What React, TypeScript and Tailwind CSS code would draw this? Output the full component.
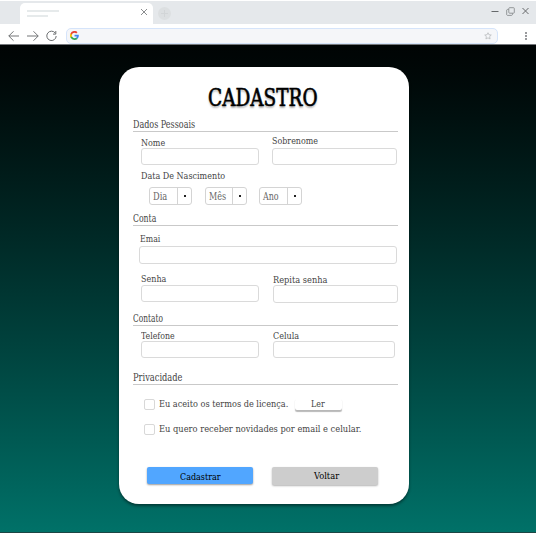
import { useLayoutEffect, useRef, useState } from "react";
import type { ReactNode } from "react";

const slab = "font-['DejaVu_Serif_Condensed','DejaVu_Serif',serif]";

/** Single-line text condensed to a given width, like a narrow slab face. */
function Fit({ w, className = "", children }: { w: number; className?: string; children: ReactNode }) {
  const ref = useRef<HTMLSpanElement>(null);
  const [scale, setScale] = useState(1);
  useLayoutEffect(() => {
    if (ref.current) setScale(w / ref.current.offsetWidth);
  }, [w]);
  return (
    <span className={`block shrink-0 whitespace-nowrap ${className}`} style={{ width: w }}>
      <span ref={ref} className="inline-block origin-left" style={{ transform: `scaleX(${scale})` }}>
        {children}
      </span>
    </span>
  );
}

function Section({ title, w, className }: { title: string; w: number; className: string }) {
  return (
    <div className={`h-[13px] border-b border-[#c9c9c9] ${className}`}>
      <Fit w={w} className="h-3 text-[10.5px] leading-[11px]">{title}</Fit>
    </div>
  );
}

function Field({ label, w, box, labelBox = "h-[11px]", className = "" }: { label: string; w: number; box: string; labelBox?: string; className?: string }) {
  return (
    <label className={`flex flex-col ${className}`}>
      <Fit w={w} className={`text-[10px] leading-[11px] ${labelBox}`}>{label}</Fit>
      <input className={`rounded-[3px] border border-[#dadada] bg-white outline-none ${box}`} />
    </label>
  );
}

function Select({ label, w, className }: { label: string; w: number; className: string }) {
  return (
    <button type="button" className={`flex h-[18px] items-stretch rounded-[3px] border border-[#d4d4d4] bg-white text-[#666] ${className}`}>
      <span className="flex flex-1 items-center pl-[3px]">
        <Fit w={w} className="text-left text-[10.5px] leading-[14px]">{label}</Fit>
      </span>
      <span className="flex w-[14px] items-center justify-center border-l border-[#d4d4d4]">
        <span className="size-[2px] bg-[#222]" />
      </span>
    </button>
  );
}

function Browser() {
  return (
    <header className="h-[45px] border-b border-[#74777b] bg-white">
      <div className="flex h-6 border-t border-white bg-[#e5e8eb]">
        <div className="h-full w-5 rounded-br-[4px] bg-[#e5e8eb]" />
        <div className="mt-[2px] flex h-[21px] w-[133px] items-center justify-between rounded-t-[5px] bg-white pl-[7px] pr-[5px]">
          <div className="flex flex-col gap-[3px]">
            <span className="h-[2px] w-8 bg-[#e6eaeb]" />
            <span className="h-[2px] w-[21px] bg-[#e6eaeb]" />
          </div>
          <svg className="-mt-[3px]" width="8" height="8" viewBox="0 0 8 8" stroke="#8b8d8f" fill="none"><path d="M1 1l6 6M7 1L1 7" /></svg>
        </div>
        <div className="ml-[5px] mt-[6px] flex size-[13px] items-center justify-center rounded-full bg-[#dcdfe1]">
          <svg width="7" height="7" viewBox="0 0 7 7" stroke="#d2d5d7"><path d="M3.5 0v7M0 3.5h7" /></svg>
        </div>
        <div className="ml-auto flex h-5 items-center gap-[7px] pr-[7px]">
          <svg width="8" height="8" viewBox="0 0 8 8" stroke="#66696b"><path d="M.5 4.5h7" /></svg>
          <svg width="9" height="9" viewBox="0 0 9 9" stroke="#8a8d90" fill="none" strokeWidth=".9"><rect x="2.8" y=".7" width="5.5" height="5.5" rx=".8" /><path d="M2.8 2.4H1.3L.7 3v4.8l.6.6h4.4l.7-.6V6.2" /></svg>
          <svg width="7" height="8" viewBox="0 0 7 8" stroke="#66696b"><path d="M.5 1l6 6M6.500 1l-6 6" /></svg>
        </div>
      </div>
      <div className="flex h-5 items-center pl-2 pt-[3px]">
        <svg width="11" height="12" viewBox="0 0 11 12" fill="none" stroke="#6b6e70" strokeWidth=".95"><path d="M11 6H.8M5.500 1.300L.8 6l4.700 4.700" /></svg>
        <svg className="ml-2" width="12" height="12" viewBox="0 0 12 12" fill="none" stroke="#6b6e70" strokeWidth=".95"><path d="M0 6h11.200M6.500 1.300L11.200 6l-4.700 4.700" /></svg>
        <svg className="ml-[7px]" width="11" height="12" viewBox="0 0 11 12" fill="none" stroke="#6b6e70"><path d="M9.300 3.100A4.700 4.700 0 1 0 10.200 6M7 4.100h2.800V1" /></svg>
        <div className="ml-[9px] flex h-[16px] w-[432px] items-center justify-between rounded-[5px] border border-[#d5e4fa] bg-[#f5f6f9] px-[3px]">
          <svg width="9" height="9" viewBox="0 0 24 24">
            <path fill="#4285f4" d="M23.5 12.3c0-.9-.1-1.5-.2-2.2H12v4.3h6.5c-.3 1.5-1.1 2.7-2.4 3.5v3h4c2.200-2 3.400-5 3.400-8.600z" />
            <path fill="#34a853" d="M12 24c3.200 0 6-1 8-2.900l-4-3c-1 .7-2.400 1.200-4 1.200-3.100 0-5.800-2.100-6.700-5H1.200v3.100A12 12 0 0 0 12 24z" />
            <path fill="#fbbc05" d="M5.300 14.300a7 7 0 0 1 0-4.600V6.600H1.200a12 12 0 0 0 0 10.800z" />
            <path fill="#ea4335" d="M12 4.700c1.800 0 3.300.6 4.600 1.800L20 3A12 12 0 0 0 1.200 6.600l4.100 3.100c.9-2.900 3.600-5 6.700-5z" />
          </svg>
          <svg className="mr-[2px]" width="8" height="8" viewBox="0 0 10 10" fill="none" stroke="#b7babd"><path d="M5 .9l1.200 2.600 2.900.3-2.100 2 .6 2.900L5 7.300 2.400 8.700 3 5.800.9 3.800l2.900-.3z" /></svg>
        </div>
        <div className="ml-auto mr-[9px] flex flex-col gap-[1px]">
          <span className="size-[2px] rounded-full bg-[#77797c]" /><span className="size-[2px] rounded-full bg-[#77797c]" /><span className="size-[2px] rounded-full bg-[#77797c]" />
        </div>
      </div>
    </header>
  );
}

export default function App() {
  return (
    <div className={`flex h-[533px] w-[536px] flex-col overflow-hidden text-[#444] ${slab}`}>
      <Browser />
      <main className="flex-1 border-b border-[#1d4644] bg-linear-to-b from-[#000404] to-[#007168] pt-[22px]">
        <form className="ml-[119px] flex h-[437px] w-[290px] flex-col rounded-[20px] bg-white pl-[14px] pr-[11px] shadow-[0_2px_3px_rgba(0,0,0,0.45)]">
          <h1 className="ml-[75px] mt-[13px] h-[34px] text-black [-webkit-text-stroke:0.6px_black] [text-shadow:0_2px_2px_rgba(0,0,0,0.3)]">
            <Fit w={110} className="text-[25px] leading-[35px]">CADASTRO</Fit>
          </h1>
          <Section title="Dados Pessoais" w={62} className="mt-[5px]" />
          <div className="mt-[3px] flex items-end pl-2">
            <Field label="Nome" w={24} box="h-[17px] w-[118px]" />
            <Field label="Sobrenome" w={46} box="h-[17px] w-[125px]" labelBox="h-[13px]" className="ml-[13px]" />
          </div>
          <Fit w={84} className="ml-2 mt-[5px] h-[12px] text-[10px] leading-[11px]">Data De Nascimento</Fit>
          <div className="mt-[5px] flex pl-4">
            <Select label="Dia" w={14} className="w-[43px]" />
            <Select label="Mês" w={17} className="ml-[13px] w-[42px]" />
            <Select label="Ano" w={16} className="ml-[12px] w-[43px]" />
          </div>
          <Section title="Conta" w={23} className="mt-[8px]" />
          <Field label="Emai" w={20} box="h-[18px] w-[258px] -ml-px" labelBox="h-[13px]" className="ml-[7px] mt-[7px]" />
          <div className="mt-[9px] flex items-start pl-2">
            <Field label="Senha" w={25} box="h-[17px] w-[118px]" labelBox="h-[12px]" />
            <Field label="Repita senha" w={54} box="h-[18px] w-[125px]" labelBox="h-[11px]" className="ml-[14px] mt-px" />
          </div>
          <Section title="Contato" w={30} className="mt-[10px]" />
          <div className="mt-[4px] flex pl-2">
            <Field label="Telefone" w={34} box="h-[17px] w-[118px]" />
            <Field label="Celula" w={26} box="h-[17px] w-[122px]" className="ml-[14px]" />
          </div>
          <Section title="Privacidade" w={49} className="mt-[14px]" />
          <div className="mt-[13px] flex h-[12px] items-center pl-[11px]">
            <span className="size-[11px] rounded-[2px] border border-[#d8d8d8]" />
            <Fit w={129} className="ml-1 text-[10px] leading-[12px]">Eu aceito os termos de licença.</Fit>
            <button type="button" className="ml-[7px] flex h-[11px] w-[47px] justify-center rounded-[2px] bg-white shadow-[0_1.5px_1px_rgba(0,0,0,0.28)]">
              <Fit w={14} className="-ml-[2px] text-left text-[10px] leading-[9px]">Ler</Fit>
            </button>
          </div>
          <div className="mt-[13px] flex h-[12px] items-center pl-[11px]">
            <span className="size-[11px] rounded-[2px] border border-[#d8d8d8]" />
            <Fit w={202} className="ml-1 text-[10px] leading-[12px]">Eu quero receber novidades por email e celular.</Fit>
          </div>
          <div className="mt-[32px] flex pl-[14px] text-black">
            <button type="button" className="flex h-[17px] w-[106px] items-center justify-center rounded-[2px] bg-[#51a6ff] shadow-[0_1px_2px_rgba(0,0,0,0.4)]">
              <Fit w={41} className="pt-[2px] text-left text-[10px] leading-[12px]">Cadastrar</Fit>
            </button>
            <button type="button" className="ml-[19px] flex h-[18px] w-[106px] items-center justify-center rounded-[2px] bg-[#cdcdcd] shadow-[0_1px_2px_rgba(0,0,0,0.3)]">
              <Fit w={25} className="ml-[3px] text-left text-[10px] leading-[12px]">Voltar</Fit>
            </button>
          </div>
        </form>
      </main>
    </div>
  );
}
